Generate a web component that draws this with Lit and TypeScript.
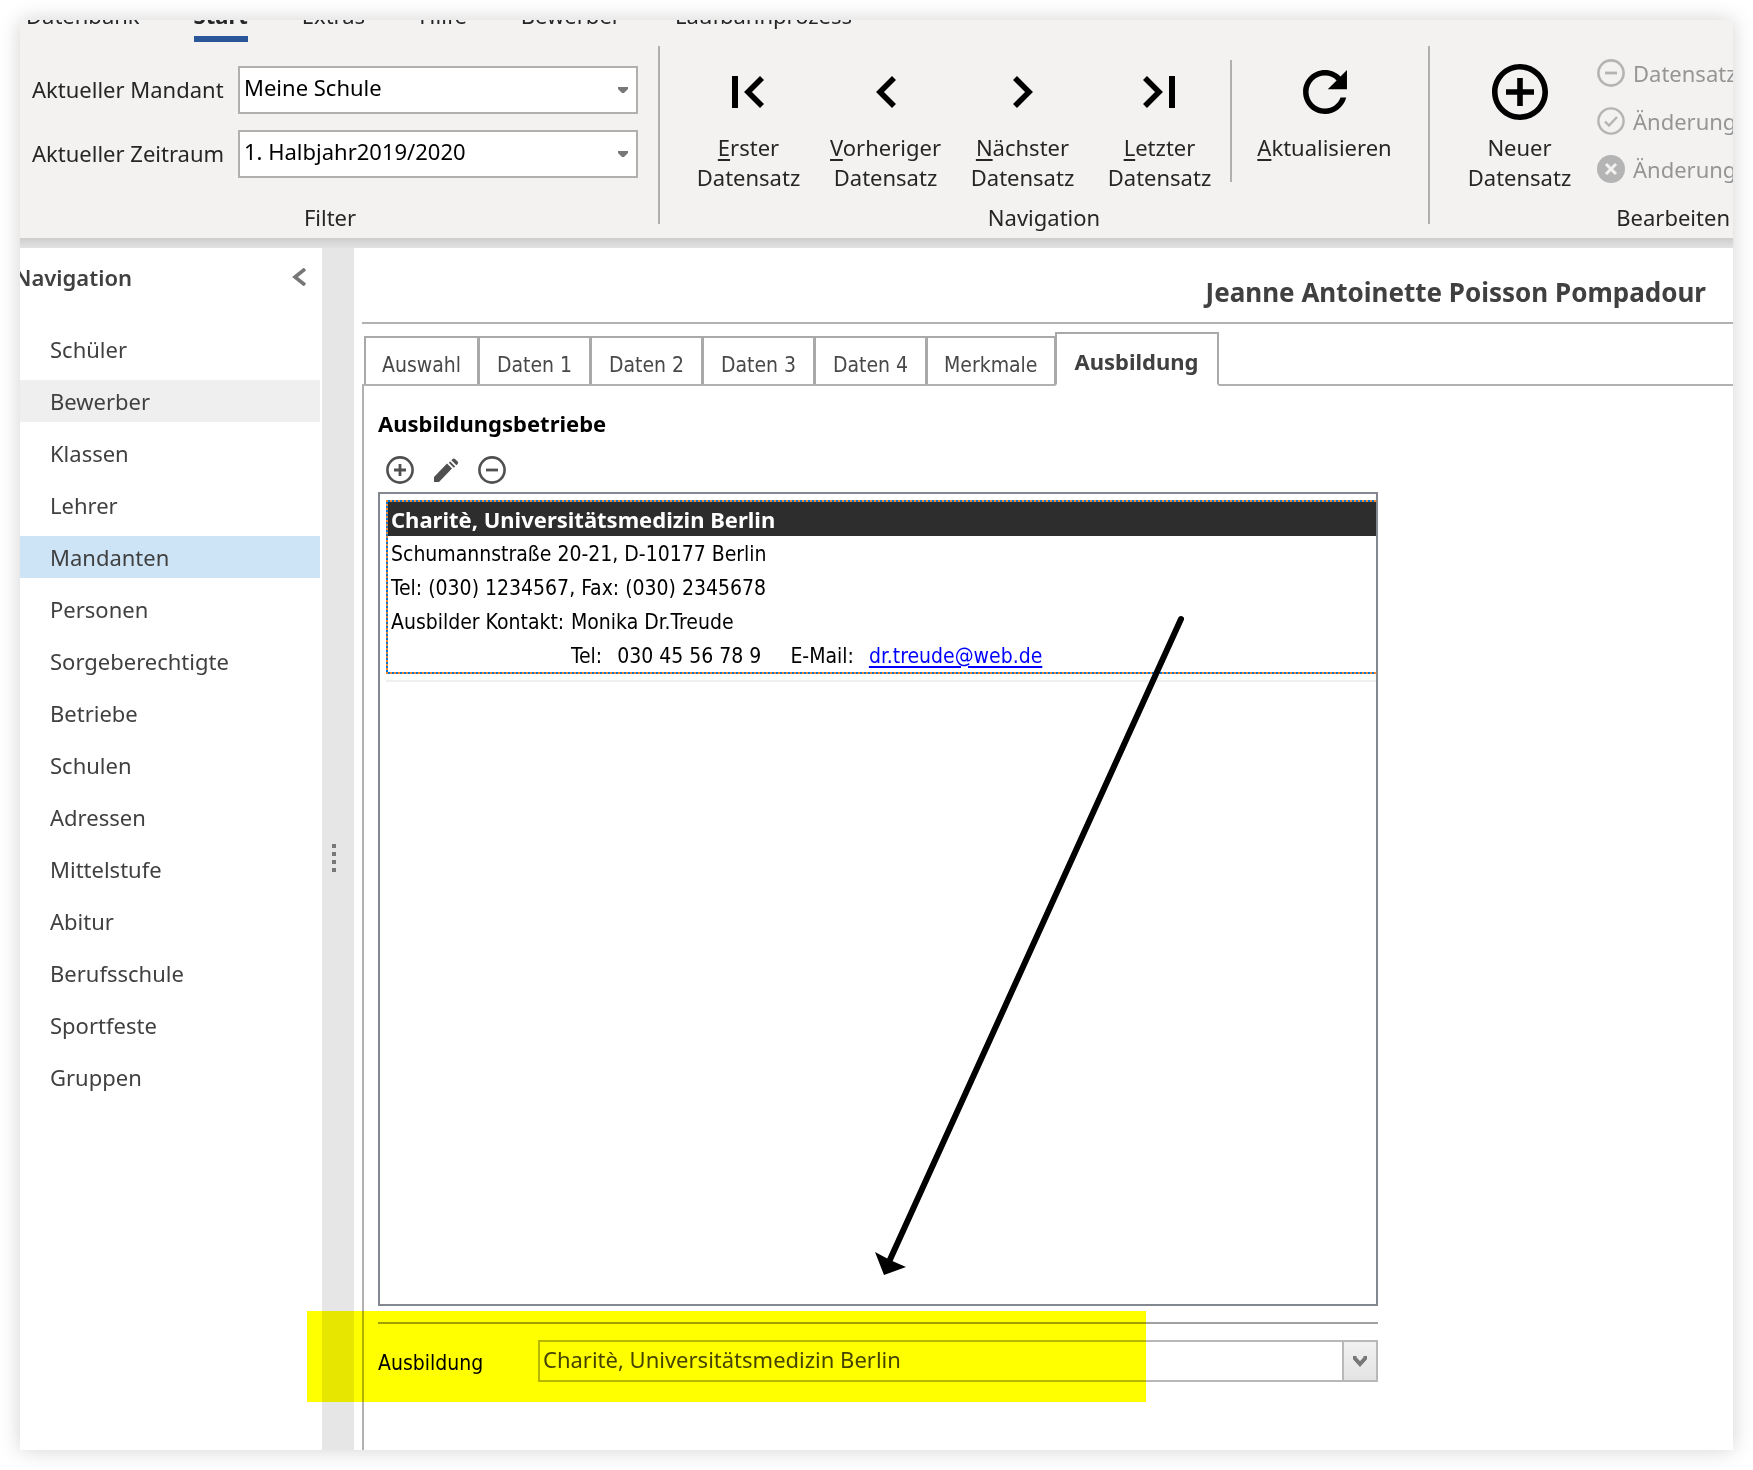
import { LitElement, html, svg, css, nothing } from "lit";
import { customElement, property, state } from "lit/decorators.js";
import { classMap } from "lit/directives/class-map.js";

const ICONS = {
  first: { box: "-4 -4 56 56", body: svg`<path d="M7 8h6v32H7z"/><path d="M37 10 23 24l14 14" fill="none" stroke="currentColor" stroke-width="5.6"/>` },
  prev: { box: "-4 -4 56 56", body: svg`<path d="M32 10 18 24l14 14" fill="none" stroke="currentColor" stroke-width="5.6"/>` },
  next: { box: "-4 -4 56 56", body: svg`<path d="M16 10l14 14-14 14" fill="none" stroke="currentColor" stroke-width="5.6"/>` },
  last: { box: "-4 -4 56 56", body: svg`<path d="M33 8h6v32h-6z"/><path d="M9 10l14 14L9 38" fill="none" stroke="currentColor" stroke-width="5.6"/>` },
  refresh: { box: "1.8 1.8 20.4 20.4", body: svg`<path d="M17.65 6.35C16.2 4.9 14.21 4 12 4c-4.42 0-7.99 3.58-7.99 8s3.57 8 7.99 8c3.73 0 6.84-2.55 7.73-6h-2.08c-.82 2.33-3.04 4-5.65 4-3.31 0-6-2.69-6-6s2.69-6 6-6c1.66 0 3.14.69 4.22 1.78L13 11h7V4l-2.35 2.35z"/>` },
  add: { box: "2 2 20 20", body: svg`<path d="M13 7h-2v4H7v2h4v4h2v-4h4v-2h-4V7zm-1-5C6.48 2 2 6.48 2 12s4.48 10 10 10 10-4.48 10-10S17.52 2 12 2zm0 18c-4.41 0-8-3.59-8-8s3.59-8 8-8 8 3.59 8 8-3.59 8-8 8z"/>` },
  plus: { box: "0 0 28 28", body: svg`<circle cx="14" cy="14" r="12.6" fill="none" stroke="currentColor" stroke-width="2.6"/><path d="M14 8v12M8 14h12" stroke="currentColor" stroke-width="2.8"/>` },
  minus: { box: "0 0 28 28", body: svg`<circle cx="14" cy="14" r="12.6" fill="none" stroke="currentColor" stroke-width="2.6"/><path d="M8 14h12" stroke="currentColor" stroke-width="2.8"/>` },
  check: { box: "0 0 28 28", body: svg`<circle cx="14" cy="14" r="12.6" fill="none" stroke="currentColor" stroke-width="2.4"/><path d="M8 14.5l4 4 8-8.5" fill="none" stroke="currentColor" stroke-width="2.4"/>` },
  cancel: { box: "0 0 28 28", body: svg`<circle cx="14" cy="14" r="14"/><path d="M9 9l10 10M19 9 9 19" stroke="#f3f2f1" stroke-width="3"/>` },
  pencil: { box: "-1 0 28 28", body: svg`<path d="M1 21v5h5l13-13.500-5-5zM15.800 6.800l5 5 1.400-1.400-5-5zM18.400 4.200l5 5 1.200-1.200c.8-.8.8-1.600 0-2.400l-2.600-2.600c-.8-.8-1.600-.8-2.400 0z"/>` },
};
type IconName = keyof typeof ICONS;

const icon = (name: IconName, cls = "icon") =>
  svg`<svg class=${cls} viewBox=${ICONS[name].box} fill="currentColor" aria-hidden="true">${ICONS[name].body}</svg>`;

const MENU = ["Datenbank", "Start", "Extras", "Hilfe", "Bewerber", "Laufbahnprozess"];
const FILTERS = [
  { id: "mandant", label: "Aktueller Mandant", value: "Meine Schule" },
  { id: "zeitraum", label: "Aktueller Zeitraum", value: "1. Halbjahr2019/2020" },
];
const RECORD_STEPS: { icon: IconName; key: string; rest: string }[] = [
  { icon: "first", key: "E", rest: "rster" },
  { icon: "prev", key: "V", rest: "orheriger" },
  { icon: "next", key: "N", rest: "ächster" },
  { icon: "last", key: "L", rest: "etzter" },
];
const EDIT_ACTIONS: { icon: IconName; label: string }[] = [
  { icon: "minus", label: "Datensatz" },
  { icon: "check", label: "Änderung" },
  { icon: "cancel", label: "Änderung" },
];
const AREAS = [
  "Schüler", "Bewerber", "Klassen", "Lehrer", "Mandanten", "Personen", "Sorgeberechtigte", "Betriebe",
  "Schulen", "Adressen", "Mittelstufe", "Abitur", "Berufsschule", "Sportfeste", "Gruppen",
];
const TABS = ["Auswahl", "Daten 1", "Daten 2", "Daten 3", "Daten 4", "Merkmale", "Ausbildung"];

const controls = css`
  *, *::before, *::after { box-sizing: border-box; }
  button, select { font: inherit; color: inherit; margin: 0; }
  button { background: none; border: 0; padding: 0; cursor: pointer; }
  svg { display: block; flex: none; }
`;

@customElement("app-ribbon")
export class AppRibbon extends LitElement {
  @state() private menu = "Start";

  static styles = [controls, css`
    :host { display: block; }
    .ribbon { background: #f3f2f1; border-bottom: 2px solid #d0cfce; color: #262626; }
    .menu { display: flex; align-items: flex-end; gap: 54px; height: 22px; padding-left: 6px; overflow: hidden; }
    .menu-item { flex: none; line-height: 30px; padding-bottom: 6px; border-bottom: 6px solid transparent; }
    .menu-item.current { font-weight: 700; border-color: #2b579a; }
    .groups { display: flex; padding: 4px 0 14px; }
    .group { display: flex; flex-direction: column; flex: none; height: 178px; border-right: 2px solid #b1b0af; }
    .group.last { flex: 1 1 0; min-width: 0; border: 0; }
    .group-body { display: flex; flex: 1; }
    .group-title { line-height: 30px; margin: 0 0 -8px; font-size: 22px; font-weight: 400; text-align: center; }
    .filter-title { padding-right: 18px; }
    .last .group-title { text-align: right; padding-right: 3px; }
    .filters { display: grid; grid-template-columns: 196px 400px; gap: 16px 10px; align-content: start; align-items: center; padding: 20px 20px 0 12px; }
    .filters label { padding-bottom: 2px; white-space: nowrap; }
    .combo { display: grid; align-items: center; }
    .combo > * { grid-area: 1 / 1; }
    .combo select { appearance: none; width: 100%; height: 48px; padding: 0 32px 6px 4px; background: #fff; border: 2px solid #b1b0af; border-radius: 0; color: #000; }
    .combo svg { justify-self: end; margin-right: 10px; width: 10px; height: 6px; pointer-events: none; color: #777; }
    .steps { padding-left: 20px; }
    .tool { display: flex; flex-direction: column; align-items: center; gap: 12px; width: 137px; padding-top: 18px; line-height: 30px; }
    .tool .icon { width: 56px; height: 56px; color: #000; }
    .tool u { text-decoration-thickness: 2px; text-underline-offset: 3px; }
    .divider { width: 2px; height: 122px; margin: 14px 24px 0 2px; background: #b1b0af; }
    .refresh { margin-right: 35px; }
    .create { margin-left: 21px; flex: none; }
    .edit-list { display: flex; flex-direction: column; gap: 18px; padding: 12px 0 0 9px; }
    .edit { display: flex; align-items: center; gap: 8px; line-height: 30px; color: #959595; white-space: nowrap; }
    .edit .icon { width: 28px; height: 28px; color: #b4b4b4; }
    .fade { height: 8px; background: linear-gradient(#d2d2d2, #e2e2e2); }
  `];

  private tool(name: IconName, key: string, rest: string, cls = "") {
    return html`<button class="tool ${cls}">${icon(name)}<span>${key ? html`<u>${key}</u>` : nothing}${rest}${name === "refresh" ? nothing : html`<br>Datensatz`}</span></button>`;
  }

  render() {
    return html`
      <header class="ribbon">
        <nav class="menu">
          ${MENU.map((m) => html`<button class=${classMap({ "menu-item": true, current: m === this.menu })} @click=${() => (this.menu = m)}>${m}</button>`)}
        </nav>
        <div class="groups">
          <section class="group">
            <div class="group-body filters">
              ${FILTERS.map((f) => html`
                <label for=${f.id}>${f.label}</label>
                <div class="combo">
                  <select id=${f.id}><option>${f.value}</option></select>
                  <svg viewBox="0 0 10 6" fill="currentColor" aria-hidden="true"><path d="M0 0h10v2L6 6H4L0 2z"/></svg>
                </div>`)}
            </div>
            <h2 class="group-title filter-title">Filter</h2>
          </section>
          <section class="group">
            <div class="group-body steps">
              ${RECORD_STEPS.map((s) => this.tool(s.icon, s.key, s.rest))}
              <div class="divider"></div>
              ${this.tool("refresh", "A", "ktualisieren", "refresh")}
            </div>
            <h2 class="group-title">Navigation</h2>
          </section>
          <section class="group last">
            <div class="group-body">
              ${this.tool("add", "", "Neuer", "create")}
              <div class="edit-list">
                ${EDIT_ACTIONS.map((a) => html`<button class="edit" disabled>${icon(a.icon)}<span>${a.label}</span></button>`)}
              </div>
            </div>
            <h2 class="group-title">Bearbeiten</h2>
          </section>
        </div>
      </header>
      <div class="fade"></div>`;
  }
}

@customElement("app-sidebar")
export class AppSidebar extends LitElement {
  @property() selected = "Mandanten";
  @property() hovered = "Bewerber";

  static styles = [controls, css`
    :host { display: block; overflow: hidden; color: #404040; }
    .head { display: flex; justify-content: space-between; align-items: center; height: 58px; padding: 0 16px 0 0; }
    .title { margin: 0 0 0 -6px; font-size: 22px; line-height: 30px; font-weight: 600; }
    .collapse svg { width: 14px; height: 18px; color: #777; }
    .list { display: flex; flex-direction: column; gap: 10px; margin: 0; padding: 22px 2px 0 0; list-style: none; }
    .area { display: block; width: 100%; padding-left: 30px; line-height: 42px; text-align: left; }
    .area.hovered { background: #efefef; }
    .area.selected { background: #cde4f7; }
  `];

  render() {
    return html`
      <div class="head">
        <h2 class="title">Navigation</h2>
        <button class="collapse" aria-label="Navigation einklappen">
          <svg viewBox="0 0 14 18" fill="none" stroke="currentColor" stroke-width="3.6" aria-hidden="true"><path d="M13 1 3 9l10 8"/></svg>
        </button>
      </div>
      <ul class="list">
        ${AREAS.map((a) => html`<li><button class=${classMap({ area: true, hovered: a === this.hovered, selected: a === this.selected })} @click=${() => (this.selected = a)}>${a}</button></li>`)}
      </ul>`;
  }
}

@customElement("app-record")
export class AppRecord extends LitElement {
  @state() private tab = "Ausbildung";

  static styles = [controls, css`
    :host { display: flex; flex-direction: column; padding-left: 8px; }
    .name { margin: 0; padding: 26px 27px 12px; border-bottom: 2px solid #b1b1b1; font-size: 26px; line-height: 36px; font-weight: 700; text-align: right; color: #404040; }
    .tabs { display: flex; align-items: flex-end; padding: 8px 0 0 2px; margin-bottom: -2px; }
    .tab { height: 50px; min-width: 113px; padding: 8px 16px 0; margin-left: -1px; border: 2px solid #a9a9a9; border-bottom-color: #c0c0c0; background: #fff; font: 21px/24px "DejaVu Sans Condensed", "DejaVu Sans", sans-serif; color: #484848; white-space: nowrap; }
    .tab:first-child { margin-left: 0; }
    .tab.active { position: relative; height: 54px; padding: 4px 18px 0; border-bottom-color: #fff; font: 700 22px/30px "Noto Sans", sans-serif; color: #404040; }
    .panel { display: flex; flex-direction: column; flex: 1; padding: 22px 14px 68px; border: 2px solid #b1b1b1; border-width: 2px 0 0 2px; }
    .subtitle { margin: 0; font-size: 22px; line-height: 30px; font-weight: 700; color: #000; }
    .tools { display: flex; gap: 18px; padding: 18px 8px 8px; color: #505050; }
    .tools .icon { width: 28px; height: 28px; }
    .list { position: relative; flex: 1; width: 100%; max-width: 1000px; padding: 6px 0 0 6px; border: 2px solid #828790; }
    .entry { padding: 2px 0 2px 2px; background: conic-gradient(#0078d7 25%, #ff8728 0 50%, #0078d7 0 75%, #ff8728 0) 0 0 / 4px 4px; }
    .entry-body { background: #fff; color: #000; font: 21px/32px "DejaVu Sans Condensed", "DejaVu Sans", sans-serif; }
    .entry-title { margin: 0; padding: 0 3px; background: #2d2d2d; color: #fff; font: 700 22px/34px "Noto Sans", sans-serif; }
    .line { margin: 0; padding: 2px 3px 0; }
    .contact { display: grid; grid-template-columns: 180px 1fr; }
    .reach { display: flex; gap: 15px; }
    .mail { margin-left: 14px; }
    .reach a { color: #00f; text-decoration-thickness: 2px; text-underline-offset: 3px; }
    .rule { height: 2px; margin-top: 6px; background: #efefef; }
    .arrow { position: absolute; left: 488px; top: 118px; width: 330px; height: 670px; pointer-events: none; }
    .separator { width: 100%; max-width: 1000px; height: 2px; margin: 16px 0; border: 0; background: #a0a0a0; }
    .field { position: relative; display: grid; grid-template-columns: 160px 1fr; align-items: center; width: 100%; max-width: 1000px; }
    .field label { padding-top: 3px; font: 21px/24px "DejaVu Sans Condensed", "DejaVu Sans", sans-serif; color: #000; }
    .combo { display: grid; grid-template-columns: 1fr 36px; height: 42px; }
    .combo select { grid-area: 1 / 1 / 2 / 3; appearance: none; padding: 0 40px 4px 3px; background: #fff; border: 2px solid #b8b8b8; border-radius: 0; color: #444; }
    .drop { grid-area: 1 / 2; display: grid; place-items: center; border: 2px solid #b8b8b8; background: linear-gradient(#f1f1f1, #e3e3e3); pointer-events: none; color: #777; }
    .drop svg { width: 14px; height: 14px; }
    .marker { position: absolute; left: -71px; top: -29px; width: 839px; height: 91px; background: #ff0; mix-blend-mode: multiply; pointer-events: none; }
  `];

  render() {
    return html`
      <h1 class="name">Jeanne Antoinette Poisson Pompadour</h1>
      <div class="tabs" role="tablist">
        ${TABS.map((t) => html`<button role="tab" aria-selected=${t === this.tab ? "true" : "false"} class=${classMap({ tab: true, active: t === this.tab })} @click=${() => (this.tab = t)}>${t}</button>`)}
      </div>
      <section class="panel">
        <h2 class="subtitle">Ausbildungsbetriebe</h2>
        <div class="tools">
          <button aria-label="Hinzufügen">${icon("plus")}</button>
          <button aria-label="Bearbeiten">${icon("pencil")}</button>
          <button aria-label="Entfernen">${icon("minus")}</button>
        </div>
        <div class="list">
          <article class="entry">
            <div class="entry-body">
              <h3 class="entry-title">Charitè, Universitätsmedizin Berlin</h3>
              <p class="line">Schumannstraße 20-21, D-10177 Berlin</p>
              <p class="line">Tel: (030) 1234567, Fax: (030) 2345678</p>
              <div class="line contact"><span>Ausbilder Kontakt:</span><span>Monika Dr.Treude</span></div>
              <div class="line contact">
                <span></span>
                <span class="reach"><span>Tel:</span><span>030 45 56 78 9</span><span class="mail">E-Mail:</span><a href="mailto:dr.treude@web.de">dr.treude@web.de</a></span>
              </div>
            </div>
          </article>
          <div class="rule"></div>
          <svg class="arrow" viewBox="0 0 330 670" aria-hidden="true">
            <path d="M313 7 20 652" stroke="#000" stroke-width="6" stroke-linecap="round"/>
            <path d="M7 640l15 8 16 7-22 8z"/>
          </svg>
        </div>
        <hr class="separator">
        <div class="field">
          <label for="ausbildung">Ausbildung</label>
          <div class="combo">
            <select id="ausbildung"><option>Charitè, Universitätsmedizin Berlin</option></select>
            <span class="drop"><svg viewBox="0 0 14 14" fill="none" stroke="currentColor" stroke-width="4" aria-hidden="true"><path d="M1.500 2v2L7 10l5.500-6V2"/></svg></span>
          </div>
          <div class="marker"></div>
        </div>
      </section>`;
  }
}

@customElement("app-root")
export class AppRoot extends LitElement {
  static styles = css`
    :host { display: flex; box-sizing: border-box; min-height: 100vh; padding: 20px; background: #fff; font: 22px/30px "Noto Sans", sans-serif; }
    .window { display: flex; flex-direction: column; flex: 1; min-width: 0; overflow: hidden; background: #fff; }
    .shadow { display: flex; flex: 1; min-width: 0; box-shadow: 0 0 20px rgba(0, 0, 0, 0.18); }
    .body { display: grid; grid-template-columns: 302px 32px minmax(0, 1fr); flex: 1; }
    .splitter { display: flex; flex-direction: column; justify-content: center; gap: 4px; padding: 18px 0 0 10px; background: #e6e6e6; }
    .grip { width: 4px; height: 4px; background: #777; }
  `;

  render() {
    return html`
      <div class="shadow">
        <div class="window">
          <app-ribbon></app-ribbon>
          <div class="body">
            <app-sidebar></app-sidebar>
            <div class="splitter">${[0, 1, 2, 3].map(() => html`<span class="grip"></span>`)}</div>
            <app-record></app-record>
          </div>
        </div>
      </div>`;
  }
}
